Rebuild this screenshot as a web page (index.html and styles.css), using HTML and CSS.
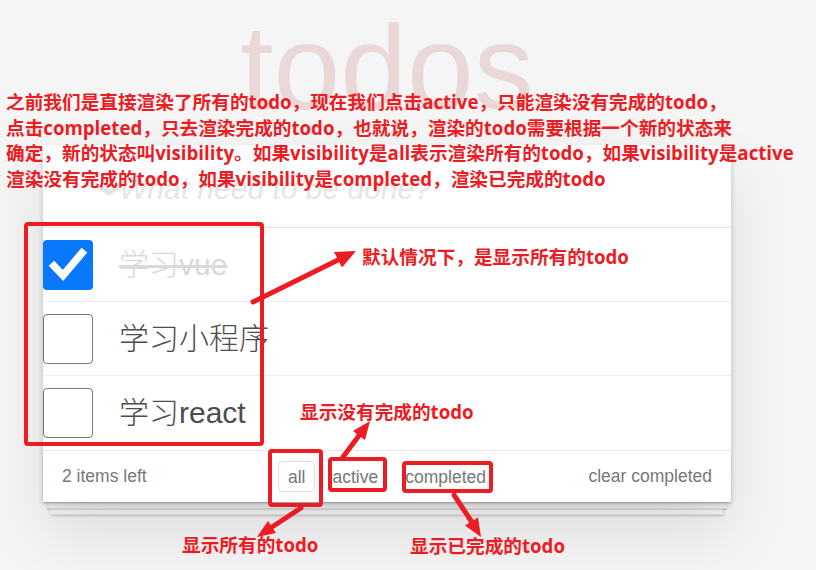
FILE: index.html
```html
<!DOCTYPE html>
<html lang="zh">
<head>
<meta charset="utf-8">
<title>todos</title>
<link rel="stylesheet" href="styles.css">
</head>
<body>
<section class="todoapp">
  <header class="header">
    <h1 class="title">todos</h1>
    <div class="new-row">
      <span class="toggle-all">❯</span>
      <div class="new-todo">What need to be done?</div>
    </div>
  </header>
  <ul class="todo-list">
    <li class="todo done">
      <span class="check checked"><svg viewBox="0 0 50 50" width="50" height="50"><path d="M11 26 L20 35.5 L39 13" fill="none" stroke="#fff" stroke-width="7.5" stroke-linecap="square" stroke-linejoin="miter"/></svg></span>
      <label class="todo-text">学习vue</label>
    </li>
    <li class="todo">
      <span class="check"></span>
      <label class="todo-text">学习小程序</label>
    </li>
    <li class="todo">
      <span class="check"></span>
      <label class="todo-text">学习react</label>
    </li>
  </ul>
  <footer class="footer">
    <span class="count">2 items left</span>
    <ul class="filters">
      <li><a class="filter selected">all</a></li>
      <li><a class="filter">active</a></li>
      <li><a class="filter">completed</a></li>
    </ul>
    <span class="clear">clear completed</span>
  </footer>
</section>

<p class="note">之前我们是直接渲染了所有的todo，现在我们点击active，只能渲染没有完成的todo，<br>点击completed，只去渲染完成的todo，也就说，渲染的todo需要根据一个新的状态来<br>确定，新的状态叫visibility。如果visibility是all表示渲染所有的todo，如果visibility是active<br>渲染没有完成的todo，如果visibility是completed，渲染已完成的todo</p>

<svg class="marks" width="816" height="570" viewBox="0 0 816 570">
  <g fill="none" stroke="#ec1c24" stroke-width="4">
    <rect x="26" y="224" width="236" height="220" rx="2"/>
    <rect x="270" y="451" width="51" height="54" rx="2"/>
    <rect x="330" y="459" width="55" height="31" rx="2"/>
    <rect x="404" y="463" width="87" height="28" rx="2"/>
  </g>
  <g stroke="#ec1c24" stroke-width="5" stroke-linecap="round">
    <line x1="253" y1="302" x2="339" y2="259.5"/>
    <line x1="343" y1="457" x2="359" y2="435.5"/>
    <line x1="301" y1="508" x2="272" y2="527"/>
    <line x1="454" y1="495" x2="471.5" y2="521.5"/>
  </g>
  <g fill="#ec1c24">
    <polygon points="356,251 342,267.5 334,252"/>
    <polygon points="370,421 365,440 353,431"/>
    <polygon points="257,537 276,533 268,521"/>
    <polygon points="481,537 478,517.5 465,525.5"/>
  </g>
</svg>

<span class="tag tag-default">默认情况下，是显示所有的todo</span>
<span class="tag tag-active">显示没有完成的todo</span>
<span class="tag tag-all">显示所有的todo</span>
<span class="tag tag-completed">显示已完成的todo</span>
</body>
</html>
```

FILE: styles.css
```css
* { box-sizing: border-box; }

html, body {
  margin: 0;
  padding: 0;
}

body {
  width: 816px;
  height: 570px;
  overflow: hidden;
  position: relative;
  background: #f5f5f5;
  font-family: "Liberation Sans", "Noto Sans CJK SC", sans-serif;
  font-weight: 300;
  color: #4d4d4d;
}

.todoapp {
  position: relative;
  width: 688px;
  margin: 145px 0 0 43px;
  background: #fff;
  box-shadow: 0 2.5px 5px 0 rgba(0, 0, 0, 0.2), 0 31px 62px 0 rgba(0, 0, 0, 0.1);
}

.title {
  position: absolute;
  top: -138px;
  left: 0;
  right: 0;
  margin: 0;
  font-size: 120px;
  line-height: 1;
  font-weight: 100;
  text-align: center;
  color: rgba(175, 47, 47, 0.15);
}

.new-row {
  position: relative;
  height: 82px;
  display: flex;
  align-items: center;
  box-shadow: inset 0 -2px 1px rgba(0, 0, 0, 0.03);
}

.toggle-all {
  position: absolute;
  left: 56px;
  top: 28px;
  font-size: 27px;
  line-height: 30px;
  color: #e6e6e6;
  transform: rotate(90deg);
}

.new-todo {
  padding-left: 76px;
  padding-top: 6px;
  font-size: 30px;
  font-style: italic;
  color: #e6e6e6;
}

.todo-list {
  list-style: none;
  margin: 0;
  padding: 0;
  border-top: 1px solid #e6e6e6;
}

.todo {
  height: 74px;
  display: flex;
  align-items: center;
  border-bottom: 1px solid #ededed;
}

.todo:last-child {
  border-bottom: none;
}

.check {
  width: 50px;
  height: 50px;
  flex: none;
  border: 1.5px solid #767676;
  border-radius: 4px;
  background: #fff;
  display: block;
}

.check.checked {
  border: none;
  background: #0a78fa;
}

.check svg { display: block; }

.todo-text {
  margin-left: 26px;
  font-size: 30px;
  line-height: 36px;
  color: #4d4d4d;
}

.done .todo-text {
  color: #d9d9d9;
  text-decoration: line-through;
}

.footer {
  position: relative;
  height: 52px;
  padding: 0 19px;
  border-top: 1px solid #e6e6e6;
  display: grid;
  grid-template-columns: 1fr auto 1fr;
  align-items: center;
  font-size: 17.5px;
  color: #777;
}

.footer::before {
  content: "";
  position: absolute;
  left: 0;
  right: 0;
  bottom: 0;
  height: 50px;
  z-index: -1;
  box-shadow: 0 1.25px 1.25px rgba(0, 0, 0, 0.2),
              0 10px 0 -3.75px #f6f6f6,
              0 11.25px 1.25px -3.75px rgba(0, 0, 0, 0.2),
              0 20px 0 -7.5px #f6f6f6,
              0 21.25px 2.5px -7.5px rgba(0, 0, 0, 0.2);
}

.count { justify-self: start; }

.filters {
  list-style: none;
  margin: 0;
  padding: 0;
  display: flex;
}

.filter {
  display: block;
  margin: 0 3.75px;
  padding: 3.75px 8.75px;
  border: 1px solid transparent;
  border-radius: 4px;
  color: inherit;
  line-height: 22px;
}

.filter.selected {
  border-color: rgba(175, 47, 47, 0.2);
}

.clear { justify-self: end; }

.note {
  position: absolute;
  top: 89px;
  left: 6px;
  margin: 0;
  font-family: "Open Sans", "Noto Sans CJK SC", sans-serif;
  font-weight: 700;
  font-size: 18.67px;
  line-height: 25.5px;
  color: #ec1c24;
  white-space: nowrap;
}

.marks {
  position: absolute;
  top: 0;
  left: 0;
  pointer-events: none;
}

.tag {
  position: absolute;
  font-family: "Open Sans", "Noto Sans CJK SC", sans-serif;
  font-weight: 700;
  font-size: 18.67px;
  line-height: 22px;
  color: #ec1c24;
  white-space: nowrap;
}

.tag-default { left: 362px; top: 246px; }
.tag-active { left: 300px; top: 401px; }
.tag-all { left: 182px; top: 534px; }
.tag-completed { left: 410px; top: 535px; }
```
